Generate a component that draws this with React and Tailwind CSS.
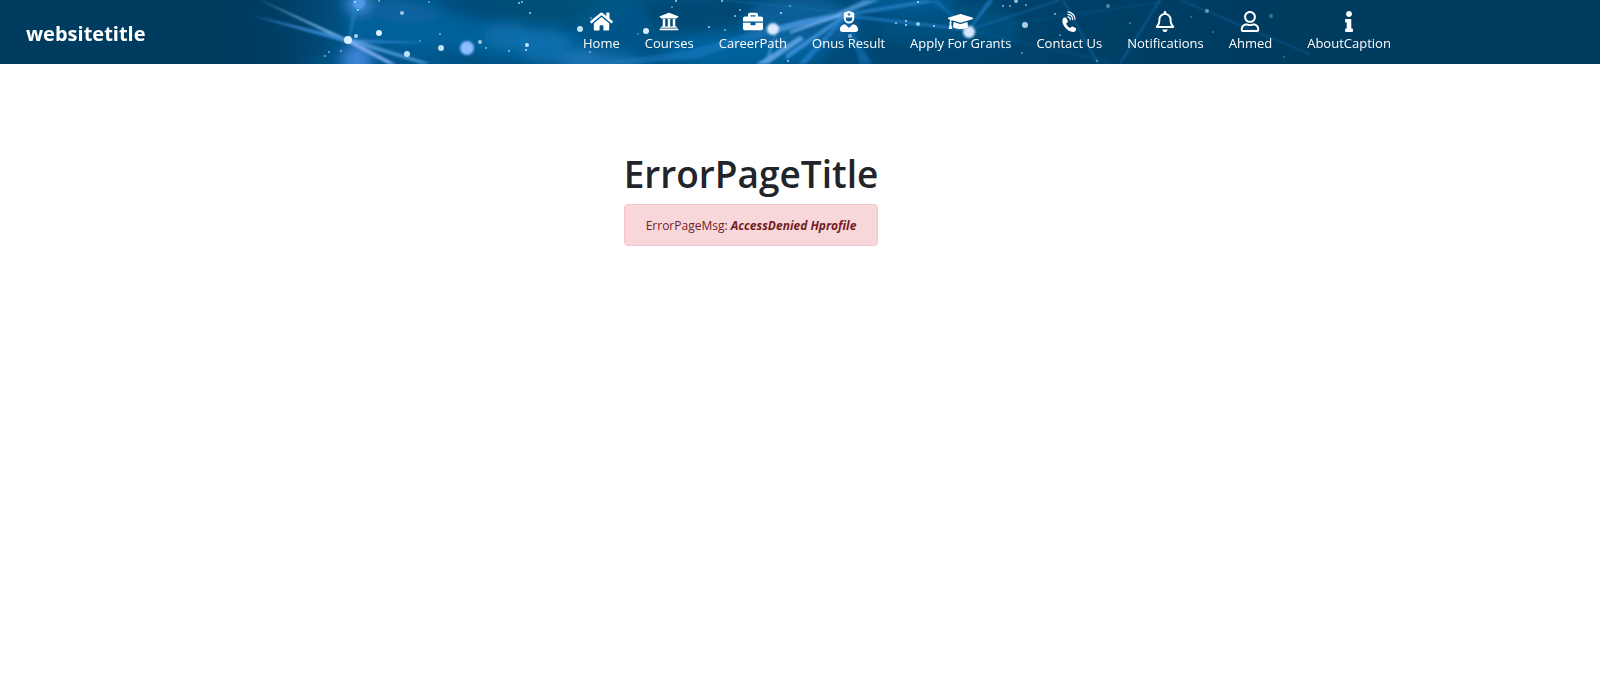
import {
  FaHome,
  FaUniversity,
  FaBriefcase,
  FaUserNurse,
  FaGraduationCap,
  FaRegBell,
  FaRegUser,
  FaInfo,
} from "react-icons/fa";

function RingingPhone({ className }) {
  return (
    <svg className={className} viewBox="9 5 16 22" fill="none" aria-hidden="true">
      <path
        fill="currentColor"
        d="M11 12.4C12 11.7 13.4 11.7 14.2 12.2L16 16.3L14 18C14.8 20 16.3 21.8 18.3 22.8L20.2 21L24.3 23C24.6 24.5 24.2 25.8 23.3 26.5C20 28 15 25.5 12.3 21.5C10 18.2 9.4 14.5 11 12.4Z"
      />
      <path
        stroke="currentColor"
        strokeWidth="1.3"
        strokeLinecap="round"
        d="M15.8 11.2A3 3 0 0 1 18.3 14.2M15.9 8.6A5.5 5.5 0 0 1 20.8 14M16 6A8 8 0 0 1 23.3 13.6"
      />
    </svg>
  );
}

const links = [
  { label: "Home", Icon: FaHome, width: "w-[23px]" },
  { label: "Courses", Icon: FaUniversity, width: "w-5" },
  { label: "CareerPath", Icon: FaBriefcase, width: "w-5" },
  { label: "Onus Result", Icon: FaUserNurse, width: "w-5" },
  { label: "Apply For Grants", Icon: FaGraduationCap, width: "w-[25px]" },
  { label: "Contact Us", Icon: RingingPhone, width: "w-5" },
  { label: "Notifications", Icon: FaRegBell, width: "w-5" },
  { label: "Ahmed", Icon: FaRegUser, width: "w-5" },
];

// [x, y, rx, ry, colour, opacity]
const glows = [
  [357, 60, 14, 16, "#4a90e8", 0.8],
  [359, 3, 12, 10, "#5aa2f5", 0.7],
  [410, 10, 36, 14, "#0a66a6", 0.5],
  [508, 36, 24, 14, "#1683c6", 0.35],
  [545, 46, 26, 18, "#1683c6", 0.4],
  [560, 6, 70, 18, "#006080", 0.4],
  [600, 62, 40, 12, "#2b83cc", 0.6],
  [660, 30, 80, 40, "#005f94", 0.35],
  [745, 52, 80, 18, "#0b74b8", 0.5],
  [800, 24, 60, 26, "#0f70b4", 0.5],
  [905, 2, 50, 12, "#0b6cae", 0.5],
  [950, 30, 70, 26, "#00598c", 0.5],
];

// [points, colour, opacity]
const beams = [
  ["258,-1 348,39 346,42", "#8cc4f0", 0.8],
  ["250,15 348,38 347,43", "#3f93e0", 0.8],
  ["348,39 420,42 420,43 348,43", "#3d92d8", 0.6],
  ["350,38 430,63 422,64 348,42", "#6db2f0", 0.6],
  ["350,40 396,64 388,64 348,43", "#8fb9ff", 0.8],
  ["348,40 353,0 361,0 350,40", "#1f86cc", 0.5],
  ["590,64 690,50 772,26 776,32 700,58 640,64", "#2a86d2", 0.35],
  ["756,64 800,36 804,39 768,64", "#7bb6f2", 0.7],
  ["766,58 777,28 770,58", "#62aef0", 0.5],
  ["774,27 800,20 842,12 842,17 800,27 777,33", "#5aa7f4", 0.65],
  ["790,31 842,13 842,16 790,34", "#8cc4ff", 0.6],
  ["786,54 846,13 848,16 786,60", "#479be8", 0.7],
  ["798,64 846,14 848,16 806,64", "#2581cf", 0.7],
  ["838,12 864,0 880,0 842,15", "#69b1f4", 0.6],
  ["844,13 925,0 935,2 844,17", "#3b92dc", 0.55],
  ["844,14 968,28 968,31 844,17", "#2a86d2", 0.6],
  ["844,15 872,64 860,64", "#1b78c0", 0.5],
  ["968,30 988,0 994,0 970,30", "#2a86d2", 0.6],
  ["966,28 930,0 938,0 970,30", "#1b78c0", 0.5],
];

// [x1, y1, x2, y2, opacity]
const threads = [
  [968, 30, 1060, 0, 0.4],
  [968, 30, 1110, 62, 0.2],
  [1063, 0, 1098, 64, 0.4],
  [1160, 0, 1120, 64, 0.45],
  [1010, 24, 1160, 2, 0.2],
  [1180, 0, 1310, 54, 0.3],
  [720, 0, 842, 12, 0.3],
];

// [x, y, r, opacity]
const sparks = [
  [348, 40, 4, 1], [356, 36, 2, 0.8], [379, 33, 3, 1], [402, 13, 2, 0.7],
  [358, 10, 1, 0.8], [355, 2, 1, 0.8], [379, 1, 1, 0.6], [325, 56, 1, 0.6],
  [329, 52, 1, 0.6], [341, 51, 1, 0.6], [407, 54, 3, 0.9], [429, 2, 1, 0.5],
  [420, 41, 1, 0.4], [440, 34, 1, 0.6], [441, 48, 3, 0.9], [480, 42, 2, 0.7],
  [486, 48, 1, 0.6], [519, 3, 1, 0.8], [522, 2, 1, 0.7], [530, 13, 1, 0.8],
  [509, 51, 1, 0.7], [527, 45, 2, 0.9], [526, 50, 1, 0.9], [580, 29, 3, 0.9],
  [590, 52, 1, 0.6], [591, 18, 1, 0.5], [638, 34, 1, 0.4], [646, 31, 3, 1],
  [676, 1, 1, 0.8], [672, 7, 1, 0.5], [722, 1, 1, 0.8], [709, 27, 1, 0.8],
  [725, 30, 1, 0.6], [735, 16, 1, 0.8], [740, 10, 1, 0.7], [781, 13, 1, 0.9],
  [790, 6, 1, 0.5], [788, 61, 1, 0.8], [850, 36, 2, 0.6], [896, 23, 1, 0.7],
  [906, 21, 1, 0.9], [906, 25, 1, 0.9], [918, 24, 2, 0.7], [934, 26, 1, 0.8],
  [918, 2, 1, 0.9], [1003, 6, 1, 0.7], [1010, 6, 1, 0.6], [1016, 1, 2, 0.7],
  [1026, 5, 1, 0.6], [1025, 25, 3, 0.8], [1055, 14, 1, 0.7], [1060, 35, 1, 0.5],
  [1022, 53, 1, 0.5], [1108, 6, 2, 0.4], [1097, 61, 1, 0.5], [1130, 23, 1, 0.4],
  [1207, 11, 2, 0.5], [1191, 17, 1, 0.3], [1271, 16, 2, 0.3], [1284, 57, 1, 0.3],
  [1213, 32, 1, 0.3],
];

function NetworkBackdrop() {
  return (
    <svg
      aria-hidden="true"
      className="absolute inset-0 h-full w-full"
      viewBox="0 0 1600 64"
      preserveAspectRatio="xMidYMid slice"
    >
      <defs>
        <linearGradient id="base" x1="0" x2="1">
          <stop offset="0.14" stopColor="#003b60" />
          <stop offset="0.21" stopColor="#004f80" />
          <stop offset="0.4" stopColor="#005080" />
          <stop offset="0.56" stopColor="#004a78" />
          <stop offset="0.66" stopColor="#004169" />
          <stop offset="0.8" stopColor="#003b60" />
        </linearGradient>
        <linearGradient id="fade" gradientUnits="userSpaceOnUse" x1="240" x2="340">
          <stop offset="0" stopColor="#003b60" />
          <stop offset="1" stopColor="#003b60" stopOpacity="0" />
        </linearGradient>
        <filter id="haze" x="-5%" y="-50%" width="110%" height="200%">
          <feGaussianBlur stdDeviation="6" />
        </filter>
        <filter id="soft" x="-10%" y="-50%" width="120%" height="200%">
          <feGaussianBlur stdDeviation="0.9" />
        </filter>
        <filter id="glint" x="-10%" y="-50%" width="120%" height="200%">
          <feGaussianBlur stdDeviation="0.6" />
        </filter>
      </defs>
      <rect width="1600" height="64" fill="url(#base)" />
      <g filter="url(#haze)">
        <path d="M340 0 L400 0 L480 22 L580 34 L600 70 L500 58 L420 48 L350 40Z" fill="#0a6eae" opacity="0.55" />
        <path d="M300 64 L345 44 L420 46 L470 70 L300 70Z" fill="#0a6eae" opacity="0.3" />
        {glows.map(([cx, cy, rx, ry, fill, opacity], i) => (
          <ellipse key={i} cx={cx} cy={cy} rx={rx} ry={ry} fill={fill} opacity={opacity} />
        ))}
        <path d="M440 0 L600 0 L570 18 L490 14Z" fill="#00446c" opacity="0.5" />
        <path d="M640 0 H760 L740 24 L660 34Z M870 40 H1000 V64 H870Z" fill="#00446c" opacity="0.7" />
      </g>
      <rect x="230" width="110" height="64" fill="url(#fade)" />
      <g filter="url(#soft)">
        {beams.map(([points, fill, opacity], i) => (
          <polygon key={i} points={points} fill={fill} opacity={opacity} />
        ))}
        {threads.map(([x1, y1, x2, y2, opacity], i) => (
          <line key={i} x1={x1} y1={y1} x2={x2} y2={y2} stroke="#1d7dc2" strokeWidth="2" opacity={opacity} />
        ))}
        <circle cx="359" cy="3" r="6" fill="#6fb0ff" opacity="0.5" />
        <circle cx="467" cy="48" r="7" fill="#8dbcff" />
        <circle cx="773" cy="29" r="6" fill="#dcecff" />
        <circle cx="969" cy="32" r="6" fill="#d4e8ff" />
      </g>
      <g filter="url(#glint)" fill="#d8f0ff">
        {sparks.map(([cx, cy, r, opacity], i) => (
          <circle key={i} cx={cx} cy={cy} r={r} opacity={opacity} />
        ))}
      </g>
    </svg>
  );
}

function NavLink({ label, Icon, width }) {
  return (
    <a href="#" className="flex flex-col items-center px-3 text-white">
      <Icon className={`h-[21px] ${width}`} aria-hidden="true" />
      <span className="whitespace-nowrap text-[13px] leading-[22px]">{label}</span>
    </a>
  );
}

export default function App() {
  return (
    <div className="min-h-screen bg-white font-['Open_Sans','Noto_Sans',sans-serif] text-[#212529]">
      <header className="relative h-16 bg-[#003b60]">
        <NetworkBackdrop />
        <div className="relative flex h-full items-start">
          <a href="#" className="w-[571px] shrink-0 pl-[26px] pt-[18px] text-[20px] leading-[32px] font-bold text-white">
            websitetitle
          </a>
          <nav aria-label="Main" className="flex gap-px pt-[11px]">
            {links.map((link) => (
              <NavLink key={link.label} {...link} />
            ))}
            <div className="pl-[10px]">
              <NavLink label="AboutCaption" Icon={FaInfo} width="w-5" />
            </div>
          </nav>
        </div>
      </header>
      <main className="flex justify-center pt-[86px] pr-[98px]">
        <div>
          <h1 className="text-[37px] leading-[48px] font-semibold">ErrorPageTitle</h1>
          <div
            role="alert"
            className="mt-[6px] rounded border border-[#f5c6cb] bg-[#f8d7da] pt-[13px] pb-[11px] text-center text-[12px] leading-[16px] text-[#721c24]"
          >
            ErrorPageMsg: <em className="font-bold">AccessDenied Hprofile</em>
          </div>
        </div>
      </main>
    </div>
  );
}
